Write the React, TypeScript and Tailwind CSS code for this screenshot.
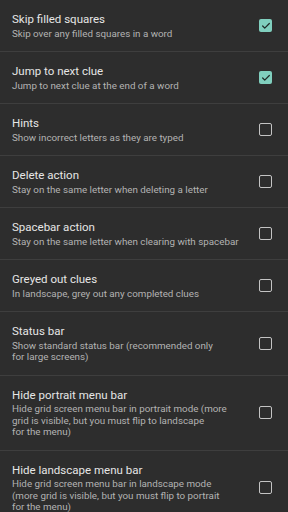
import { Check } from "lucide-react";

interface Pref {
  title: string;
  summary: string[];
  checked?: boolean;
}

// Each summary entry is one rendered line, the wraps follow the screenshot
const PREFS: Pref[] = [
  { title: "Skip filled squares", summary: ["Skip over any filled squares in a word"], checked: true },
  { title: "Jump to next clue", summary: ["Jump to next clue at the end of a word"], checked: true },
  { title: "Hints", summary: ["Show incorrect letters as they are typed"] },
  { title: "Delete action", summary: ["Stay on the same letter when deleting a letter"] },
  { title: "Spacebar action", summary: ["Stay on the same letter when clearing with spacebar"] },
  { title: "Greyed out clues", summary: ["In landscape, grey out any completed clues"] },
  { title: "Status bar", summary: ["Show standard status bar (recommended only", "for large screens)"] },
  {
    title: "Hide portrait menu bar",
    summary: ["Hide grid screen menu bar in portrait mode (more", "grid is visible, but you must flip to landscape", "for the menu)"],
  },
  {
    title: "Hide landscape menu bar",
    summary: ["Hide grid screen menu bar in landscape mode", "(more grid is visible, but you must flip to portrait", "for the menu)"],
  },
];

function CheckBox({ checked }: { checked?: boolean }) {
  if (checked) {
    return (
      <span className="flex h-[13px] w-[13px] shrink-0 items-center justify-center rounded-[2px] bg-[#80cfbe]">
        <Check size={10} strokeWidth={3} className="text-[#1f2b28]" />
      </span>
    );
  }
  return <span className="h-[13px] w-[13px] shrink-0 rounded-[2px] border-[1.5px] border-[#c4c4c4]" />;
}

export default function App() {
  return (
    <div className="h-[512px] w-[288px] overflow-hidden bg-[#2d2d2d] font-['Roboto',sans-serif]">
      {PREFS.map((pref) => (
        <div key={pref.title} className="flex items-center border-b border-[#3e3e3e] pl-3 pr-4">
          <div className="flex-1 py-3">
            <div className="text-[11.5px] leading-[15.5px] text-[#e6e6e6]">{pref.title}</div>
            <div className="text-[9.8px] leading-[11.5px] text-[#b3b3b3]">
              {pref.summary.map((line) => (
                <div key={line} className="whitespace-nowrap">{line}</div>
              ))}
            </div>
          </div>
          <CheckBox checked={pref.checked} />
        </div>
      ))}
    </div>
  );
}
